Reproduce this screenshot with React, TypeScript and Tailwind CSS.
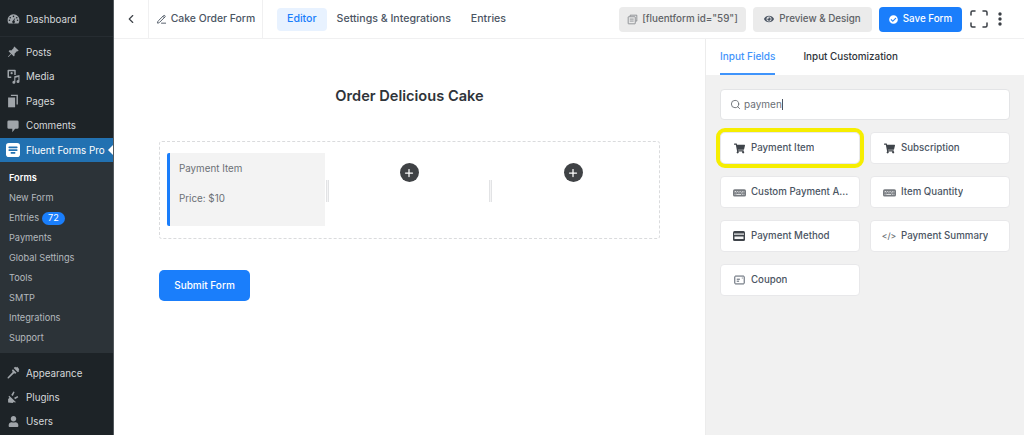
import React from 'react';
import { BsKeyboardFill, BsPinAngleFill } from 'react-icons/bs';
import { FaCheckCircle, FaEye, FaShoppingCart, FaUser } from 'react-icons/fa';
import { FiChevronLeft, FiPlus, FiSearch } from 'react-icons/fi';
import { LuPencilLine } from 'react-icons/lu';

const GaugeIcon = () => (
    <svg viewBox="0 0 20 20" className="w-[13px] h-[13px]" fill="currentColor">
        <path fillRule="evenodd" d="M10 2a9 9 0 0 0-8 13.2c.3.6.9.8 1.5.8h13c.6 0 1.2-.2 1.5-.8A9 9 0 0 0 10 2zM10 4a1.2 1.2 0 1 1 0 2.400A1.200 1.200 0 0 1 10 4zM5 6a1.200 1.200 0 1 1 0 2.400A1.200 1.200 0 0 1 5 6zm10 0a1.200 1.200 0 1 1 0 2.400A1.200 1.200 0 0 1 15 6zM3.800 10a1.200 1.200 0 1 1 0 2.400 1.200 1.200 0 0 1 0-2.400zm12.400 0a1.200 1.200 0 1 1 0 2.400 1.200 1.200 0 0 1 0-2.400zM13 7l-1.800 5a2 2 0 1 1-2.200 0z" />
    </svg>
);

const MediaIcon = () => (
    <svg viewBox="0 0 20 20" className="w-[15px] h-[15px]" fill="currentColor">
        <path fillRule="evenodd" d="M3 1h9a1 1 0 0 1 1 1v6h-2V3H4v7h3v2H3a1 1 0 0 1-1-1V2a1 1 0 0 1 1-1zm4.500 3a1.500 1.500 0 1 1 0 3 1.500 1.500 0 0 1 0-3z" />
        <path d="M18 8v8.500a2 2 0 1 1-2-2c.2 0 .4 0 .5.100V10.500l-4 1v6a2 2 0 1 1-2-2c.2 0 .4 0 .5.100V9.500z" />
    </svg>
);

const PagesIcon = () => (
    <svg viewBox="0 0 20 20" className="w-[14px] h-[14px]" fill="currentColor">
        <path d="M7 1h10v14h-2V3H7z" />
        <path d="M3 5h10v14H3z" />
    </svg>
);

const CommentIcon = () => (
    <svg viewBox="0 0 20 20" className="w-[14px] h-[14px]" fill="currentColor">
        <path d="M4 2h12a2 2 0 0 1 2 2v8a2 2 0 0 1-2 2h-3l-4 5v-5H4a2 2 0 0 1-2-2V4a2 2 0 0 1 2-2z" />
    </svg>
);

const BrushIcon = () => (
    <svg viewBox="0 0 20 20" className="w-[14px] h-[14px]" fill="currentColor">
        <path d="M11 3l2-2 1.500 1 1.500-1 3 3.500-1 1.500 1 1-2 2z" />
        <path d="M10 4.500l5 5-1.500 1.500-2-.5L4 17.500c-1 1-2.500-.5-1.500-1.500L9.500 8.500 8.500 6z" />
    </svg>
);

const PlugIcon = () => (
    <svg viewBox="0 0 20 20" className="w-[14px] h-[14px]" fill="currentColor">
        <path d="M3 18v-5l2-2-1.500-1.500 1.200-1.200L14 17l-1.200 1.200L11.500 16.800 9.500 18.500z" />
        <path d="M7.500 7l3-5 1.800 1-2.500 5.500zM11.500 11l5-2.500 1 1.800-4.500 3z" />
    </svg>
);

const FluentLogo = () => (
    <svg viewBox="0 0 20 20" className="w-[14px] h-[14px]">
        <rect width="20" height="20" rx="4" fill="#ffffff" />
        <rect x="3.500" y="5" width="13" height="2.400" rx="1" fill="#2271b1" />
        <rect x="3.500" y="9" width="13" height="2.400" rx="1" fill="#2271b1" />
        <rect x="6.500" y="13" width="7" height="2.400" rx="1" fill="#2271b1" />
    </svg>
);

const CopyDocIcon = () => (
    <svg viewBox="0 0 14 14" className="w-[11px] h-[11px]" fill="none" stroke="#7a7e83" strokeWidth="1">
        <path d="M4 3V1.500h8.500V9H11" />
        <rect x="1.500" y="3.500" width="9" height="9" rx=".5" />
        <path d="M3.500 6.500h5M3.500 9h5" />
    </svg>
);

const FullscreenIcon = () => (
    <svg viewBox="0 0 18 18" className="w-[18px] h-[18px]" fill="none" stroke="#3a3f45" strokeWidth="1.500" strokeLinecap="round">
        <path d="M1 5V2.500A1.500 1.500 0 0 1 2.500 1H5M13 1h2.500A1.500 1.500 0 0 1 17 2.500V5M17 13v2.500a1.500 1.500 0 0 1-1.500 1.500H13M5 17H2.500A1.500 1.500 0 0 1 1 15.500V13" />
    </svg>
);

const DotsIcon = () => (
    <svg viewBox="0 0 4 14" className="w-[4px] h-[14px]" fill="#3a3f45">
        <circle cx="2" cy="2" r="1.700" />
        <circle cx="2" cy="7" r="1.700" />
        <circle cx="2" cy="12" r="1.700" />
    </svg>
);

const CardIcon = () => (
    <svg viewBox="0 0 12 10" className="w-[12px] h-[10px]">
        <rect width="12" height="10" rx="1.500" fill="#3f444a" />
        <rect x="1" y="2.500" width="10" height="1.200" fill="#f5f5f5" />
        <rect x="1.500" y="5.500" width="9" height="2.500" fill="#f5f5f5" />
    </svg>
);

const CouponIcon = () => (
    <svg viewBox="0 0 14 12" className="w-[11px] h-[10px]" fill="none" stroke="#4b5563" strokeWidth="1.200">
        <rect x="1" y="1" width="12" height="10" rx="1" />
        <path d="M3.500 5h4M3.500 7.500h3M10 3.500h1" />
    </svg>
);

const MenuRow = ({ icon, label, className }: { icon: React.ReactNode; label: string; className: string }) => (
    <div className={`flex items-center text-[9.8px] ${className}`}>
        <div className="w-[26px] flex justify-center text-[#a0a5aa]">{icon}</div>
        <span className="pt-[2px]">{label}</span>
    </div>
);

const SubRow = ({ label, active, badge }: { label: string; active?: boolean; badge?: string }) => (
    <div className={`h-5 pl-[9px] flex items-center text-[9.2px] ${active ? 'font-semibold text-white' : 'text-[#b4b9be]'}`}>
        {label}
        {badge && <span className="ml-[3px] h-[13px] px-[6px] rounded-full bg-[#1a7efb] text-white flex items-center">{badge}</span>}
    </div>
);

const Sidebar = () => (
    <aside className="w-[114px] h-full shrink-0 bg-[#1d2327] text-[#d5d8da] border-r border-[#8a8f94]/50 flex flex-col">
        <MenuRow icon={<GaugeIcon />} label="Dashboard" className="h-[34px] mt-[3px] border-b border-[#262c31]" />
        <div className="h-[3px]" />
        <MenuRow icon={<BsPinAngleFill size={12} />} label="Posts" className="h-6" />
        <MenuRow icon={<MediaIcon />} label="Media" className="h-[25px]" />
        <MenuRow icon={<PagesIcon />} label="Pages" className="h-6" />
        <MenuRow icon={<CommentIcon />} label="Comments" className="h-[25px]" />
        <div className="relative h-6 shrink-0 flex items-center bg-[#2271b1] text-white text-[9.8px]">
            <div className="w-[26px] flex justify-center"><FluentLogo /></div>
            <span className="whitespace-nowrap pt-[2px]">Fluent Forms Pro</span>
            <div className="absolute right-0 top-[7px] w-0 h-0 border-y-[5px] border-y-transparent border-r-[5px] border-r-white" />
        </div>
        <div className="bg-[#2c3338] pt-[6px] h-[191px] shrink-0">
            <SubRow label="Forms" active />
            <SubRow label="New Form" />
            <SubRow label="Entries" badge="72" />
            <SubRow label="Payments" />
            <SubRow label="Global Settings" />
            <SubRow label="Tools" />
            <SubRow label="SMTP" />
            <SubRow label="Integrations" />
            <SubRow label="Support" />
        </div>
        <div className="h-2 shrink-0" />
        <MenuRow icon={<BrushIcon />} label="Appearance" className="h-6" />
        <MenuRow icon={<PlugIcon />} label="Plugins" className="h-6" />
        <MenuRow icon={<FaUser size={11} />} label="Users" className="h-6" />
    </aside>
);

const TopBar = () => (
    <header className="h-[39px] shrink-0 flex items-center border-b border-[#f0f0f1] bg-white text-[10.6px] text-[#4b5563]">
        <div className="w-[35px] h-full flex items-center justify-center border-r border-[#f0f0f1] text-[#3f444a]">
            <FiChevronLeft size={14} />
        </div>
        <div className="w-[114px] h-full flex items-center justify-center gap-[4px] border-r border-[#f0f0f1] font-medium text-[10.4px]">
            <LuPencilLine size={11} />
            <span>Cake Order Form</span>
        </div>
        <div className="ml-[14px] h-[23px] px-[10px] rounded-[4px] flex items-center bg-[#e8f2ff] text-[#1a7efb] font-medium">Editor</div>
        <span className="ml-[10px] font-medium">Settings & Integrations</span>
        <span className="ml-5 font-medium">Entries</span>
        <div className="ml-auto flex items-center text-[9.8px]">
            <div className="h-[25px] w-[127px] rounded-[4px] bg-[#ebebeb] flex items-center justify-center gap-[4px] text-[#606266]">
                <CopyDocIcon />
                <span className="font-medium">[fluentform id="59"]</span>
            </div>
            <div className="ml-[7px] h-[25px] w-[119px] rounded-[4px] bg-[#ebebeb] flex items-center justify-center gap-[5px] text-[#606266]">
                <FaEye size={10} className="text-[#4b5563]" />
                <span className="font-medium">Preview & Design</span>
            </div>
            <div className="ml-[7px] h-[25px] w-[83px] rounded-[4px] bg-[#1a7efb] flex items-center justify-center gap-[5px] text-white">
                <FaCheckCircle size={9} />
                <span className="font-medium">Save Form</span>
            </div>
            <div className="ml-[8px] w-[18px] flex justify-center"><FullscreenIcon /></div>
            <div className="ml-[10px] mr-[22px] w-[4px] flex justify-center"><DotsIcon /></div>
        </div>
    </header>
);

const PlusButton = () => (
    <div className="w-[19px] h-[19px] rounded-full bg-[#3f4245] flex items-center justify-center text-white">
        <FiPlus size={12} strokeWidth={2.500} />
    </div>
);

const Handle = () => (
    <div className="h-[22px] w-[3px] border-x border-[#e2e3e5] bg-[#f4f4f5] self-start mt-[27px]" />
);

const Canvas = () => (
    <main className="flex-1 bg-white px-[45px] pt-[47px]">
        <h1 className="text-center text-[14.6px] leading-[20px] font-semibold text-[#2f343a]">Order Delicious Cake</h1>
        <div className="mt-[35px] h-[98px] rounded-[3px] border border-dashed border-[#dadbdd] pl-[7px] pt-[11px] flex">
            <div className="w-[158px] h-[73px] rounded-l-[2px] border-l-[3px] border-[#1a7efb] bg-[#f3f3f3] pl-[9px] pt-[9px] text-[9.8px] leading-[14px] text-[#6b7075]">
                <p>Payment Item</p>
                <p className="mt-[16px]">Price: $10</p>
            </div>
            <div className="ml-[1px]"><Handle /></div>
            <div className="w-[160px] flex justify-center pt-[10px]"><PlusButton /></div>
            <Handle />
            <div className="flex-1 pr-[5px] flex justify-center pt-[10px]"><PlusButton /></div>
        </div>
        <button className="mt-[31px] w-[91px] h-[31px] rounded-[5px] bg-[#1a7efb] text-white text-[10px] font-medium">Submit Form</button>
    </main>
);

const fields = [
    { label: 'Payment Item', icon: <FaShoppingCart size={11} /> },
    { label: 'Subscription', icon: <FaShoppingCart size={11} /> },
    { label: 'Custom Payment A...', icon: <BsKeyboardFill size={13} className="text-[#777b80]" /> },
    { label: 'Item Quantity', icon: <BsKeyboardFill size={13} className="text-[#777b80]" /> },
    { label: 'Payment Method', icon: <CardIcon /> },
    { label: 'Payment Summary', icon: <span className="text-[8.5px] text-[#6b7075]">{'</>'}</span> },
    { label: 'Coupon', icon: <CouponIcon /> },
];

const FieldPanel = () => (
    <section className="w-[319px] shrink-0 h-full bg-[#f1f1f1] border-l border-[#ececec] flex flex-col">
        <div className="h-[36px] shrink-0 bg-white pl-[14px] flex text-[10px] font-medium">
            <div className="h-full flex items-center border-b-[2px] border-[#3f94fb] text-[#3f94fb]">Input Fields</div>
            <div className="h-full ml-[28px] pb-[2px] flex items-center text-[#2f343a] text-[9.9px]">Input Customization</div>
        </div>
        <div className="ml-[14px] mr-[14px] mt-[14px] h-[31px] rounded-[4px] border border-[#e3e4e6] bg-white flex items-center pl-[9px] gap-[3px] text-[10px] text-[#6b7075]">
            <FiSearch size={11} />
            <span>paymen</span>
            <span className="w-px h-[11px] bg-[#4b5563] -ml-[3px]" />
        </div>
        <div className="ml-[14px] mr-[14px] mt-[12px] grid grid-cols-2 gap-x-[10px] gap-y-[12px]">
            {fields.map((field, i) => (
                <div key={field.label} className={`h-[32px] rounded-[4px] bg-white border border-[#e8e8ea] flex items-center text-[9.7px] font-medium text-[#4b5563] ${i === 0 ? 'outline-[4px] outline-[#f6ee00] rounded-[5px]' : ''}`}>
                    <div className="w-[30px] pl-[6px] flex justify-center text-[#3f444a]">{field.icon}</div>
                    <span className="truncate">{field.label}</span>
                </div>
            ))}
        </div>
    </section>
);

export default function App() {
    return (
        <div className="w-[1024px] h-[435px] overflow-hidden flex bg-white font-['Inter',sans-serif]">
            <Sidebar />
            <div className="flex-1 min-w-0 flex flex-col">
                <TopBar />
                <div className="flex-1 min-h-0 flex">
                    <Canvas />
                    <FieldPanel />
                </div>
            </div>
        </div>
    );
}
